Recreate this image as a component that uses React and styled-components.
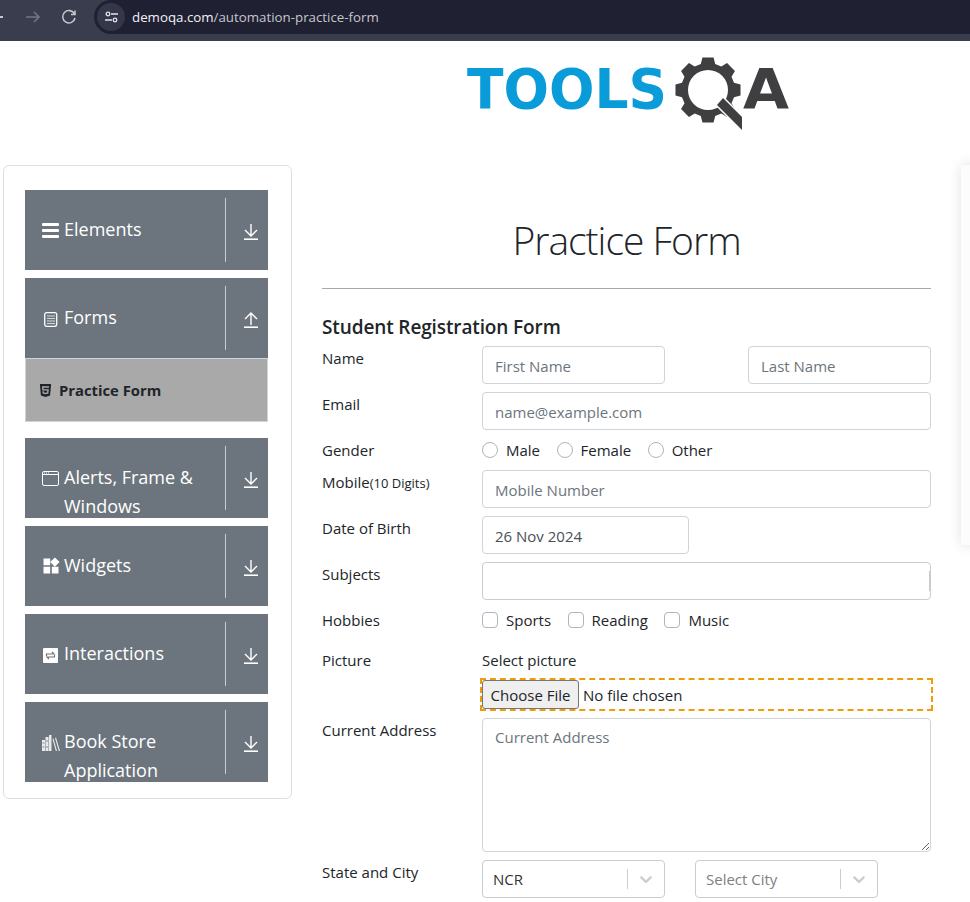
import React from 'react';
import styled, { createGlobalStyle } from 'styled-components';
import { FaHtml5 } from 'react-icons/fa';
import { MdWidgets } from 'react-icons/md';

const FONT = '"Open Sans", "Noto Sans", sans-serif';

const GlobalStyle = createGlobalStyle`
	html, body {
		margin: 0;
		padding: 0;
		background: #fff;
		font-family: ${FONT};
		color: #212529;
	}
	* { box-sizing: border-box; }
`;

const Page = styled.div`
	width: 970px;
	height: 902px;
	overflow: hidden;
`;

/* browser bar */
const BrowserBar = styled.div`
	height: 41px;
	background: #3a3d4e;
	display: flex;
	align-items: flex-start;
	padding-left: 24px;
`;
const NavIcon = styled.svg`
	width: 18px;
	height: 18px;
	margin-top: 8px;
	margin-right: 18px;
	fill: none;
	stroke: ${(p) => p.$color};
	stroke-width: 1.6;
`;
const BackStub = styled.div`
	width: 3px;
	height: 2px;
	background: #c4c5cd;
	margin: 16px 21px 0 -24px;
`;
const AddressPill = styled.div`
	flex: 1;
	height: 34px;
	margin-left: -2px;
	background: #1f2032;
	border-radius: 17px 0 0 17px;
	display: flex;
	align-items: center;
	padding-left: 3px;
	font-size: 13.3px;
	color: #c5c6ce;
`;
const TuneBadge = styled.div`
	width: 28px;
	height: 28px;
	border-radius: 50%;
	background: #34364a;
	display: flex;
	align-items: center;
	justify-content: center;
	margin-right: 7px;
`;
const Host = styled.span`
	color: #f2f2f5;
`;

/* logo */
const Header = styled.header`
	height: 124px;
	padding: 12px 0 0 464px;
`;
const LogoSvg = styled.svg`
	display: block;
	width: 330px;
	height: 84px;
`;

/* main */
const Main = styled.div`
	display: flex;
	align-items: flex-start;
`;
const SideCard = styled.aside`
	flex: none;
	width: 289px;
	height: 634px;
	margin-left: 3px;
	border: 1px solid #dfdfdf;
	border-radius: 6px;
	padding: 24px 23px 0 21px;
	display: flex;
	flex-direction: column;
	gap: 8px;
`;
const MenuButton = styled.div`
	height: 80px;
	background: #6c757d;
	color: #fff;
	overflow: hidden;
	display: flex;
`;
const MenuLabel = styled.div`
	width: 200px;
	padding: 25px 0 0 17px;
	font-size: 18px;
	line-height: 29px;
	display: flex;
	gap: 5px;
`;
const MenuIconBox = styled.span`
	width: 17px;
	flex: none;
	display: flex;
	justify-content: center;
	padding-top: ${(p) => p.$top || 8}px;
	svg { display: block; flex: none; }
`;
const MenuRule = styled.div`
	width: 1px;
	height: 64px;
	margin: 8px 0;
	background: #c8ccd0;
`;
const ArrowCell = styled.div`
	flex: 1;
	display: flex;
	padding: 34px 0 0 17px;
`;
const ActiveItem = styled.div`
	height: 64px;
	margin-bottom: 8px;
	margin-top: -8px;
	background: #a9a9a9;
	border: 1px solid #ced4da;
	color: #212529;
	font-size: 14.8px;
	font-weight: 700;
	display: flex;
	align-items: center;
	padding-left: 12px;
	gap: 6px;
`;

const FormColumn = styled.main`
	flex: none;
	width: 609px;
	margin-left: 30px;
`;
const Title = styled.h1`
	margin: 0;
	height: 124px;
	padding-top: 46px;
	text-align: center;
	font-size: 39px;
	letter-spacing: -1px;
	line-height: 58px;
	font-weight: 300;
	border-bottom: 1px solid #a8a8a8;
`;
const FormTitle = styled.h5`
	margin: 0;
	padding-top: 24px;
	height: 57px;
	font-size: 19px;
	letter-spacing: -0.12px;
	line-height: 28px;
	font-weight: 600;
`;
const Row = styled.div`
	display: grid;
	grid-template-columns: 160px 449px;
	margin-bottom: ${(p) => p.$gap ?? 8}px;
`;
const Label = styled.label`
	font-size: 15px;
	line-height: 24px;
	height: 24px;
`;
const Small = styled.span`
	font-size: 13px;
`;
const Split = styled.div`
	display: flex;
	justify-content: ${(p) => (p.$tight ? 'flex-start' : 'space-between')};
	gap: ${(p) => (p.$tight ? '30px' : '0')};
`;
const TextInput = styled.input`
	display: block;
	width: ${(p) => p.$w || '100%'};
	height: 38px;
	border: 1px solid #ced4da;
	border-radius: 4px;
	padding: 2px 12px 0;
	font-family: ${FONT};
	font-size: 15px;
	color: #495057;
	background: #fff;
	&::placeholder { color: #6c757d; opacity: 1; }
`;
const SubjectBox = styled.div`
	height: 38px;
	border: 1px solid #ccc;
	border-radius: 4px;
	display: flex;
	align-items: center;
	justify-content: flex-end;
`;
const SubjectSliver = styled.span`
	width: 1px;
	height: 20px;
	background: #ccc;
`;
const Area = styled.textarea`
	display: block;
	width: 100%;
	height: 134px;
	border: 1px solid #ced4da;
	border-radius: 4px;
	padding: 6px 12px;
	font-family: ${FONT};
	font-size: 15px;
	line-height: 24px;
	&::placeholder { color: #6c757d; opacity: 1; }
`;
const Choices = styled.div`
	display: flex;
	align-items: center;
	height: 24px;
	gap: 16.5px;
`;
const Choice = styled.label`
	display: flex;
	align-items: center;
	gap: 8px;
	font-size: 15px;
	line-height: 24px;
`;
const Tick = styled.input`
	appearance: none;
	margin: 0;
	width: 16px;
	height: 16px;
	border: 1px solid #adb5bd;
	background: #fff;
	border-radius: ${(p) => (p.type === 'radio' ? '50%' : '4px')};
`;
const PictureLabel = styled.div`
	font-size: 15px;
	line-height: 24px;
	margin-bottom: 6px;
`;
const FileBox = styled.div`
	width: 453px;
	height: 33px;
	margin-left: -2px;
	outline: 2px dashed #f09c0a;
	outline-offset: -2px;
	padding: 2px 0 0 2px;
	display: flex;
`;
const FileInput = styled.input`
	font-family: ${FONT};
	font-size: 15px;
	color: #212529;
	width: 440px;
	height: 29px;
	line-height: 29px;
	&::file-selector-button {
		height: 29px;
		width: 97px;
		padding: 0;
		margin-right: 4px;
		font-family: ${FONT};
		font-size: 15px;
		color: #212529;
		background: #efefef;
		border: 1px solid #767676;
		border-radius: 3px;
	}
`;
const SelectBox = styled.div`
	width: 183px;
	height: 38px;
	border: 1px solid #ccc;
	border-radius: 4px;
	display: flex;
	align-items: center;
	padding-left: 10px;
	font-size: 15px;
	color: ${(p) => (p.$muted ? '#808080' : '#333')};
`;
const SelectValue = styled.span`
	flex: 1;
`;
const SelectRule = styled.span`
	width: 1px;
	height: 20px;
	background: #ccc;
`;
const Chevron = styled.svg`
	width: 20px;
	height: 20px;
	margin: 0 8px;
	fill: #ccc;
`;
const AdPanel = styled.div`
	flex: none;
	width: 20px;
	height: 380px;
	margin-left: 30px;
	background: #fcfcfc;
	box-shadow: 0 0 14px rgba(0, 0, 0, 0.12);
`;

function ArrowIcon({ up }) {
	return (
		<svg width="16" height="16" viewBox="0 0 16 16" fill="none" stroke="#fff" strokeWidth="1.4">
			{up ? <path d="M8 13V1M2 7l6-6 6 6" /> : <path d="M8 0v12M2 6l6 6 6-6" />}
			<path d="M1 15.200h14" strokeWidth="1.6" />
		</svg>
	);
}

function BarsIcon() {
	return (
		<svg width="17" height="16" viewBox="0 0 17 16" fill="#fff">
			<rect y="1" width="17" height="3" rx="1" />
			<rect y="7" width="17" height="3" rx="1" />
			<rect y="13" width="17" height="3" rx="1" />
		</svg>
	);
}

function FormsIcon() {
	return (
		<svg width="14" height="15" viewBox="0 0 14 15">
			<rect x="0.700" y="0.700" width="12" height="13.600" rx="2" fill="#6c757d" stroke="#fff" strokeWidth="1.300" />
			<path d="M3 4h8M3 6.500h8M3 9h8M3 11.500h8" stroke="#d5d8da" strokeWidth="1.200" />
		</svg>
	);
}

function WindowIcon() {
	return (
		<svg width="17" height="15" viewBox="0 0 17 15" fill="none" stroke="#fff">
			<rect x="0.500" y="0.500" width="16" height="14" rx="1.500" />
			<path d="M1 3.500h15" />
			<path d="M2 2h1M4 2h1M6 2h1" />
		</svg>
	);
}

function InteractIcon() {
	return (
		<svg width="15" height="15" viewBox="0 0 15 15">
			<rect width="15" height="15" rx="1" fill="#fff" />
			<path d="M3.500 8V6h7M9 4l2 2-2 0M11.500 7v2h-7M6 11L4 9l2 0" fill="none" stroke="#6c757d" strokeWidth="1.200" />
		</svg>
	);
}

function BooksIcon() {
	return (
		<svg width="18" height="16" viewBox="0 0 18 16" fill="#e8eaeb">
			<rect x="0" y="5" width="3" height="11" />
			<rect x="3.500" y="2" width="3" height="14" />
			<rect x="7" y="0" width="2.500" height="16" />
			<path d="M10.500 4l1-.4 3.500 12.400h-1.200zM13 3l1-.4 4 13.400h-1.200z" />
			<path d="M.5 8h2M.5 12h2M4 6h2M4 12h2" stroke="#6c757d" strokeWidth="0.800" />
		</svg>
	);
}

// 8 tooth gear outline with a round hole
function gearPath(cx, cy, rOut, rRoot, rHole) {
	const pt = (r, a) => `${(cx + r * Math.cos(a)).toFixed(2)} ${(cy + r * Math.sin(a)).toFixed(2)}`;
	const step = Math.PI / 4;
	let d = '';
	for (let i = 0; i < 8; i++) {
		const a = i * step;
		d += `${i ? 'L' : 'M'}${pt(rRoot, a - 0.27)}L${pt(rOut, a - 0.17)}L${pt(rOut, a + 0.17)}L${pt(rRoot, a + 0.27)}`;
	}
	d += `ZM${cx - rHole} ${cy}a${rHole} ${rHole} 0 1 0 ${rHole * 2} 0a${rHole} ${rHole} 0 1 0 ${-rHole * 2} 0Z`;
	return d;
}

function Logo() {
	return (
		<LogoSvg viewBox="464 53 330 84">
			<text x="467" y="108" fontFamily='"DejaVu Sans", sans-serif' fontWeight="700" fontSize="56" fill="#0a9bd9" textLength="200" lengthAdjust="spacingAndGlyphs">TOOLS</text>
			<path d={gearPath(708, 90, 33, 27, 20)} fill="#3f3f41" fillRule="evenodd" />
			<path d="M723 98L742 117V130L717 105Z" fill="#3f3f41" stroke="#fff" strokeWidth="3" paintOrder="stroke" />
			<text x="743" y="108" fontFamily='"DejaVu Sans", sans-serif' fontWeight="700" fontSize="56" fill="#3f3f41" textLength="46" lengthAdjust="spacingAndGlyphs">A</text>
		</LogoSvg>
	);
}

const menu = [
	{ name: 'Elements', icon: <BarsIcon />, top: 7 },
	{ name: 'Forms', icon: <FormsIcon />, top: 9, open: true },
	{ name: 'Alerts, Frame & Windows', icon: <WindowIcon />, top: 8 },
	{ name: 'Widgets', icon: <MdWidgets size={20} color="#fff" />, top: 5 },
	{ name: 'Interactions', icon: <InteractIcon />, top: 9 },
	{ name: 'Book Store Application', icon: <BooksIcon />, top: 8 }
];

const chevronPath = 'M4.516 7.548c0.436-0.446 1.043-0.481 1.576 0l3.908 3.747 3.908-3.747c0.533-0.481 1.141-0.446 1.574 0 0.436 0.445 0.408 1.197 0 1.615-0.406 0.418-4.695 4.502-4.695 4.502-0.217 0.223-0.502 0.335-0.787 0.335s-0.570-0.112-0.789-0.335c0 0-4.287-4.084-4.695-4.502s-0.436-1.170 0-1.615z';

export default function App() {
	return (
		<Page>
			<GlobalStyle />
			<BrowserBar>
				<BackStub />
				<NavIcon $color="#74757f" viewBox="0 0 18 18"><path d="M2 9h13M10 4l5 5-5 5" /></NavIcon>
				<NavIcon $color="#c4c5cd" viewBox="0 0 18 18"><path d="M14.500 6A6.200 6.200 0 1 0 15 10M15 2.500V6.500h-4" /></NavIcon>
				<AddressPill>
					<TuneBadge>
						<svg width="13" height="12" viewBox="0 0 13 12" fill="none" stroke="#e4e4e8" strokeWidth="1.300">
							<circle cx="3" cy="3" r="1.800" />
							<path d="M6 3h7M0 9h7" />
							<circle cx="10" cy="9" r="1.800" />
						</svg>
					</TuneBadge>
					<Host>demoqa.com</Host>/automation-practice-form
				</AddressPill>
			</BrowserBar>
			<Header><Logo /></Header>
			<Main>
				<SideCard>
					{menu.map((m) => (
						<React.Fragment key={m.name}>
							<MenuButton>
								<MenuLabel>
									<MenuIconBox $top={m.top}>{m.icon}</MenuIconBox>
									<span>{m.name}</span>
								</MenuLabel>
								<MenuRule />
								<ArrowCell><ArrowIcon up={m.open} /></ArrowCell>
							</MenuButton>
							{m.open && (
								<ActiveItem>
									<FaHtml5 size={15} color="#212529" />
									Practice Form
								</ActiveItem>
							)}
						</React.Fragment>
					))}
				</SideCard>
				<FormColumn>
					<Title>Practice Form</Title>
					<FormTitle>Student Registration Form</FormTitle>
					<Row>
						<Label>Name</Label>
						<Split>
							<TextInput $w="183px" placeholder="First Name" />
							<TextInput $w="183px" placeholder="Last Name" />
						</Split>
					</Row>
					<Row>
						<Label>Email</Label>
						<TextInput placeholder="name@example.com" />
					</Row>
					<Row>
						<Label>Gender</Label>
						<Choices>
							<Choice><Tick type="radio" name="gender" />Male</Choice>
							<Choice><Tick type="radio" name="gender" />Female</Choice>
							<Choice><Tick type="radio" name="gender" />Other</Choice>
						</Choices>
					</Row>
					<Row>
						<Label>Mobile<Small>(10 Digits)</Small></Label>
						<TextInput placeholder="Mobile Number" />
					</Row>
					<Row>
						<Label>Date of Birth</Label>
						<TextInput $w="207px" defaultValue="26 Nov 2024" />
					</Row>
					<Row>
						<Label>Subjects</Label>
						<SubjectBox><SubjectSliver /></SubjectBox>
					</Row>
					<Row $gap={16}>
						<Label>Hobbies</Label>
						<Choices>
							<Choice><Tick type="checkbox" />Sports</Choice>
							<Choice><Tick type="checkbox" />Reading</Choice>
							<Choice><Tick type="checkbox" />Music</Choice>
						</Choices>
					</Row>
					<Row $gap={7}>
						<Label>Picture</Label>
						<div>
							<PictureLabel>Select picture</PictureLabel>
							<FileBox><FileInput type="file" /></FileBox>
						</div>
					</Row>
					<Row>
						<Label>Current Address</Label>
						<Area placeholder="Current Address" />
					</Row>
					<Row>
						<Label>State and City</Label>
						<Split $tight>
							<SelectBox>
								<SelectValue>NCR</SelectValue>
								<SelectRule />
								<Chevron viewBox="0 0 20 20"><path d={chevronPath} /></Chevron>
							</SelectBox>
							<SelectBox $muted>
								<SelectValue>Select City</SelectValue>
								<SelectRule />
								<Chevron viewBox="0 0 20 20"><path d={chevronPath} /></Chevron>
							</SelectBox>
						</Split>
					</Row>
				</FormColumn>
				<AdPanel />
			</Main>
		</Page>
	);
}
